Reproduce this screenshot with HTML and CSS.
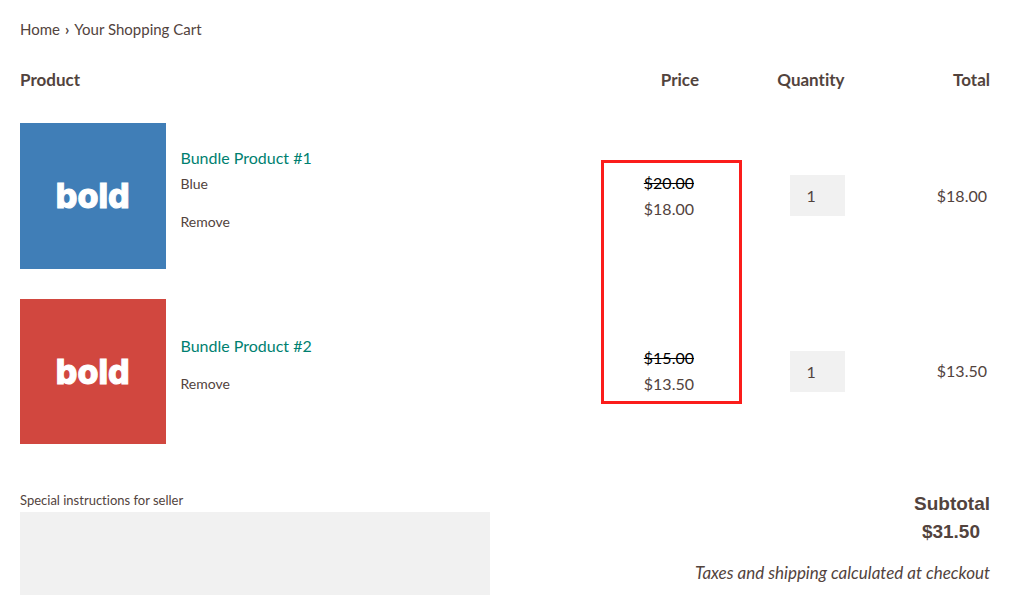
FILE: index.html
```html
<!DOCTYPE html>
<html lang="en">
<head>
  <meta charset="UTF-8">
  <meta name="viewport" content="width=device-width, initial-scale=1.0">
  <title>Your Shopping Cart</title>
  <link rel="stylesheet" href="styles.css">
</head>
<body>

  <nav class="breadcrumb">
    <a href="#">Home</a>
    <span class="arrow">›</span>
    <span>Your Shopping Cart</span>
  </nav>

  <form class="cart">
    <!-- Cart items -->
    <div class="cart-items">
      <table class="cart-table">
        <colgroup>
          <col class="col-small">
          <col>
          <col class="col-small">
          <col class="col-small">
          <col class="col-small">
        </colgroup>
        <thead>
          <tr>
            <th class="head-product" colspan="2">Product</th>
            <th>Price</th>
            <th>Quantity</th>
            <th>Total</th>
          </tr>
        </thead>
        <tbody>
          <tr>
            <td class="cell-image">
              <a href="#" class="thumb blue">
                <svg viewBox="0 0 146 146"><text x="73" y="85" text-anchor="middle">bold</text></svg>
              </a>
            </td>
            <td class="cell-product">
              <a href="#" class="product-name">Bundle Product #1</a>
              <small class="variant">Blue</small>
              <a href="#" class="remove">Remove</a>
            </td>
            <td class="cell-price"><s>$20.00</s><span>$18.00</span></td>
            <td><input class="qty" type="text" value="1" aria-label="Quantity"></td>
            <td class="cell-total">$18.00</td>
          </tr>
          <tr>
            <td class="cell-image">
              <a href="#" class="thumb red">
                <svg viewBox="0 0 146 146"><text x="73" y="85" text-anchor="middle">bold</text></svg>
              </a>
            </td>
            <td class="cell-product">
              <a href="#" class="product-name">Bundle Product #2</a>
              <a href="#" class="remove">Remove</a>
            </td>
            <td class="cell-price"><s>$15.00</s><span>$13.50</span></td>
            <td><input class="qty" type="text" value="1" aria-label="Quantity"></td>
            <td class="cell-total">$13.50</td>
          </tr>
        </tbody>
      </table>
      <div class="highlight"></div>
    </div>

    <!-- Note and subtotal -->
    <div class="cart-footer">
      <div class="note">
        <label for="note">Special instructions for seller</label>
        <textarea id="note"></textarea>
      </div>
      <div class="summary">
        <p class="subtotal">Subtotal</p>
        <p class="subtotal amount">$31.50</p>
        <p class="taxes">Taxes and shipping calculated at checkout</p>
      </div>
    </div>
  </form>

</body>
</html>
```
FILE: styles.css
```css
* {
  box-sizing: border-box;
}

body {
  margin: 0;
  padding: 16px 32px 0 20px;
  font-family: Lato, "Liberation Sans", sans-serif;
  font-size: 16px;
  font-variant-ligatures: none;
  line-height: 26px;
  color: #52433d;
  background: #fff;
}

a {
  color: inherit;
  text-decoration: none;
}

.breadcrumb {
  display: flex;
  gap: 5px;
  font-size: 15px;
}

.arrow {
  font-weight: bold;
}

.cart-items {
  position: relative;
  margin-top: 12px;
}

.cart-table {
  width: 100%;
  table-layout: fixed;
  border-collapse: collapse;
}

.col-small {
  width: 15%;
}

th,
td {
  padding: 0;
  text-align: right;
}

th {
  padding: 13px 0 15px;
  font-size: 17px;
}

.head-product {
  text-align: left;
}

.cell-image {
  padding: 15px 0;
}

.thumb {
  display: block;
}

.thumb svg {
  display: block;
  width: 100%;
}

.thumb text {
  font-family: Inter, sans-serif;
  font-size: 34px;
  font-weight: 800;
  fill: #fff;
  stroke: #fff;
  stroke-width: 1px;
}

.blue {
  background: #407eb7;
}

.red {
  background: #d1473f;
}

.cell-product {
  padding-left: 15px;
  text-align: left;
}

.product-name,
.variant,
.remove {
  display: block;
}

.product-name {
  color: #007f70;
}

.variant,
.remove {
  font-size: 14px;
}

.remove {
  margin: 12px 0;
}

.cell-price {
  padding-right: 5px;
}

.cell-price s,
.cell-price span {
  display: block;
}

.cell-price s {
  width: max-content;
  margin-left: auto;
  color: #000;
}

.cell-total {
  padding-right: 3px;
}

.qty {
  width: 55px;
  height: 41px;
  padding: 0 17px;
  border: 0;
  border-radius: 0;
  background: #f1f1f1;
  font: inherit;
  color: inherit;
  vertical-align: middle;
}

/* red frame around the discounted prices */
.highlight {
  position: absolute;
  top: 106px;
  right: calc(30% - 43px);
  width: 141px;
  height: 244px;
  border: 3px solid #fb1d1b;
  pointer-events: none;
}

.cart-footer {
  display: flex;
  gap: 30px;
  margin-top: 29px;
}

.note,
.summary {
  flex: 1;
}

.note label {
  display: block;
  line-height: 24px;
  font-size: 13px;
}

.note textarea {
  display: block;
  width: 100%;
  height: 83px;
  border: 0;
  background: #f1f1f1;
  font: inherit;
  color: inherit;
  resize: none;
}

.summary {
  padding-top: 2px;
  text-align: right;
}

.summary p {
  margin: 0;
}

.subtotal {
  font-family: "Liberation Sans", Arial, sans-serif;
  font-size: 19px;
  font-weight: bold;
  line-height: 28px;
}

.amount {
  padding-right: 10px;
}

.summary .taxes {
  margin-top: 14px;
  font-size: 17px;
  font-style: italic;
}
```
